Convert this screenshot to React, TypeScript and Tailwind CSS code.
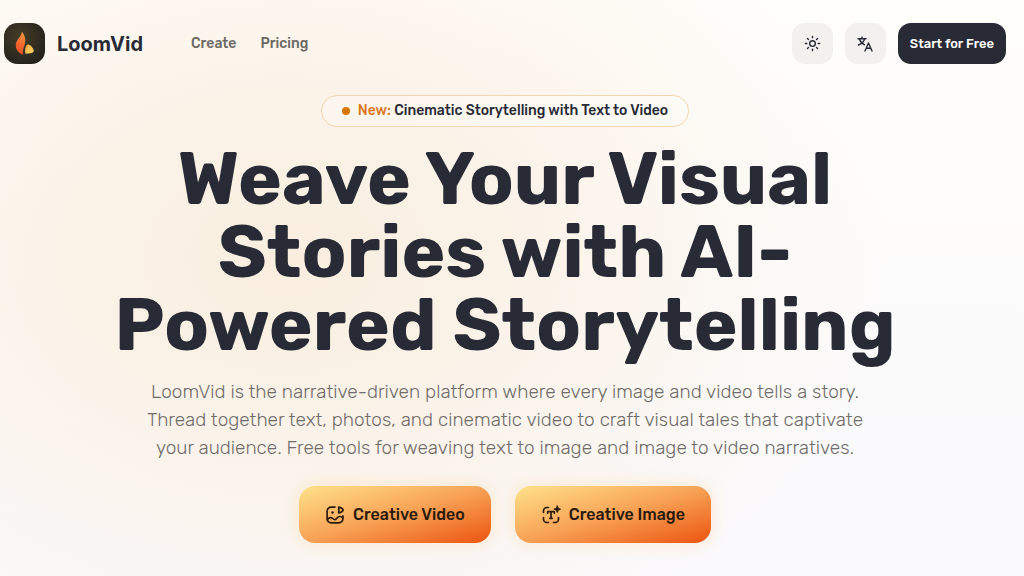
import React from 'react';
import { Sun } from 'lucide-react';

const LogoMark: React.FC = () => (
  <svg className="h-[41px] w-[41px]" viewBox="0 0 40 40" aria-hidden="true">
    <defs>
      <radialGradient id="tile" cx="0.4" cy="0.35" r="0.7">
        <stop offset="0" stopColor="#453d28" />
        <stop offset="1" stopColor="#24221c" />
      </radialGradient>
      <linearGradient id="flame" x1="0.6" y1="0" x2="0.4" y2="1">
        <stop offset="0" stopColor="#f79a3e" />
        <stop offset="0.55" stopColor="#f4672c" />
        <stop offset="1" stopColor="#e6502a" />
      </linearGradient>
      <linearGradient id="ember" x1="0" y1="0" x2="1" y2="1">
        <stop offset="0" stopColor="#f3a83c" />
        <stop offset="1" stopColor="#f9d768" />
      </linearGradient>
    </defs>
    <rect width="40" height="40" rx="13" fill="url(#tile)" />
    <path d="M17.500 8.500c2.500 3 4 7 3 11.500-.8 3.500-2.500 6-2 11C14 29 11.300 26 11.500 21.500 11.700 16 16.500 14.500 17.500 8.500z" fill="url(#flame)" />
    <path d="M21.500 22.500c.6-1.600 2.300-2 3.700-1 1.800 1.300 3.300 3.300 3.700 5.200.4 1.900-.9 2.600-2.900 2.800l-5 .5c-.9-2.500-.3-5.500.5-7.500z" fill="url(#ember)" />
  </svg>
);

const TranslateIcon: React.FC = () => (
  <svg className="h-4 w-4" viewBox="0 0 16 16" fill="none" stroke="currentColor" strokeWidth="1.4" strokeLinecap="round" strokeLinejoin="round" aria-hidden="true">
    <path d="M1 2.800h8M5 1v1.800M2.300 2.800C3.200 5.500 5 7.500 7.500 8.800M7.700 2.800C6.800 5.800 4.500 8 1.500 9" />
    <path d="M8 15l3.500-8 3.500 8M9.300 12.300h4.400" />
  </svg>
);

const VideoIcon: React.FC = () => (
  <svg className="h-5 w-5" viewBox="0 0 24 24" fill="none" stroke="currentColor" strokeWidth="2" strokeLinecap="round" strokeLinejoin="round" aria-hidden="true">
    <path d="M12 2.500H7.500a5 5 0 0 0-5 5v9a5 5 0 0 0 5 5h9a5 5 0 0 0 5-5V13" />
    <path d="M16.500 2.500v7c2.500-.4 4.700-1.700 5.200-3.500-.5-1.800-2.700-3.100-5.200-3.500z" />
    <path d="M3 17.500c2-3 4.500-3 6.500-1s3.500 1 5-1 4.500-2.500 7 0" />
    <circle cx="9" cy="9" r="1.500" fill="currentColor" stroke="none" />
  </svg>
);

const TextImageIcon: React.FC = () => (
  <svg className="h-5 w-5" viewBox="0 0 24 24" fill="none" stroke="currentColor" strokeWidth="2" strokeLinecap="round" strokeLinejoin="round" aria-hidden="true">
    <path d="M9 3H7a4 4 0 0 0-4 4v2M3 15v2a4 4 0 0 0 4 4h2M15 21h2a4 4 0 0 0 4-4v-2" />
    <path d="M8 10V8h8v2M12 8v8M10.500 16h3" />
    <path d="M19.500 1l1.200 2.800L23.500 5l-2.800 1.200L19.500 9l-1.200-2.800L15.500 5l2.800-1.200z" fill="currentColor" strokeWidth="1" />
  </svg>
);

interface ActionProps {
  icon: React.ReactNode;
  label: string;
}

const ActionButton: React.FC<ActionProps> = ({ icon, label }) => (
  <button
    type="button"
    className="flex h-[57px] items-center gap-2 rounded-2xl bg-[linear-gradient(to_bottom_right,#ffe28a,#f8a255_50%,#ec5410)] px-[26px] text-base font-medium text-[#2a1a0c] shadow-[0_0_16px_rgba(251,191,100,0.3)]"
  >
    {icon}
    {label}
  </button>
);

const Header: React.FC = () => (
  <header className="flex h-[87px] items-center justify-between px-1">
    <div className="flex items-center">
      <a href="#home" className="flex items-center gap-3">
        <LogoMark />
        <span className="font-['Inter',sans-serif] text-xl font-bold">LoomVid</span>
      </a>
      <nav className="ml-12 flex gap-6 text-sm font-medium text-[#6b6863]">
        <a href="#create">Create</a>
        <a href="#pricing">Pricing</a>
      </nav>
    </div>
    <div className="flex items-center gap-3">
      <button type="button" aria-label="Toggle theme" className="flex h-[41px] w-[41px] items-center justify-center rounded-[13px] bg-[#f2f1f0]">
        <Sun size={17} />
      </button>
      <button type="button" aria-label="Change language" className="flex h-[41px] w-[41px] items-center justify-center rounded-[13px] bg-[#f2f1f0]">
        <TranslateIcon />
      </button>
      <button type="button" className="h-[41px] rounded-[13px] bg-[#282b35] px-3 text-[13px] font-medium text-white">
        Start for Free
      </button>
    </div>
  </header>
);

const App: React.FC = () => {
  return (
    <div className="min-h-screen bg-[radial-gradient(ellipse_600px_440px_at_28%_45%,#f9eede_0%,rgba(251,241,229,0.75)_45%,transparent_100%),linear-gradient(to_bottom,#fffefb,#faf9fc)] pr-[14px] font-['Rubik','Inter',sans-serif] text-[#282b35]">
      <Header />
      <main className="flex flex-col items-center pt-2 pb-8 text-center">
        <div className="flex h-8 items-center gap-2 rounded-full border border-[#f3d5b1] bg-white/30 px-5 text-sm font-medium">
          <span className="h-2 w-2 rounded-full bg-[#d97706]" />
          <p>
            <span className="text-[#d9781f]">New:</span> Cinematic Storytelling with Text to Video
          </p>
        </div>
        <h1 className="mt-4 max-w-[820px] text-[74px] leading-[73px] font-bold">
          Weave Your Visual Stories with AI-Powered Storytelling
        </h1>
        <p className="mt-4 max-w-[740px] text-[19px] leading-[28px] font-light text-[#6f6c6a]">
          LoomVid is the narrative-driven platform where every image and video tells a story. Thread together text, photos, and cinematic video to craft visual tales that captivate your audience. Free tools for weaving text to image and image to video narratives.
        </p>
        <div className="mt-6 flex gap-6">
          <ActionButton icon={<VideoIcon />} label="Creative Video" />
          <ActionButton icon={<TextImageIcon />} label="Creative Image" />
        </div>
      </main>
    </div>
  );
};

export default App;
